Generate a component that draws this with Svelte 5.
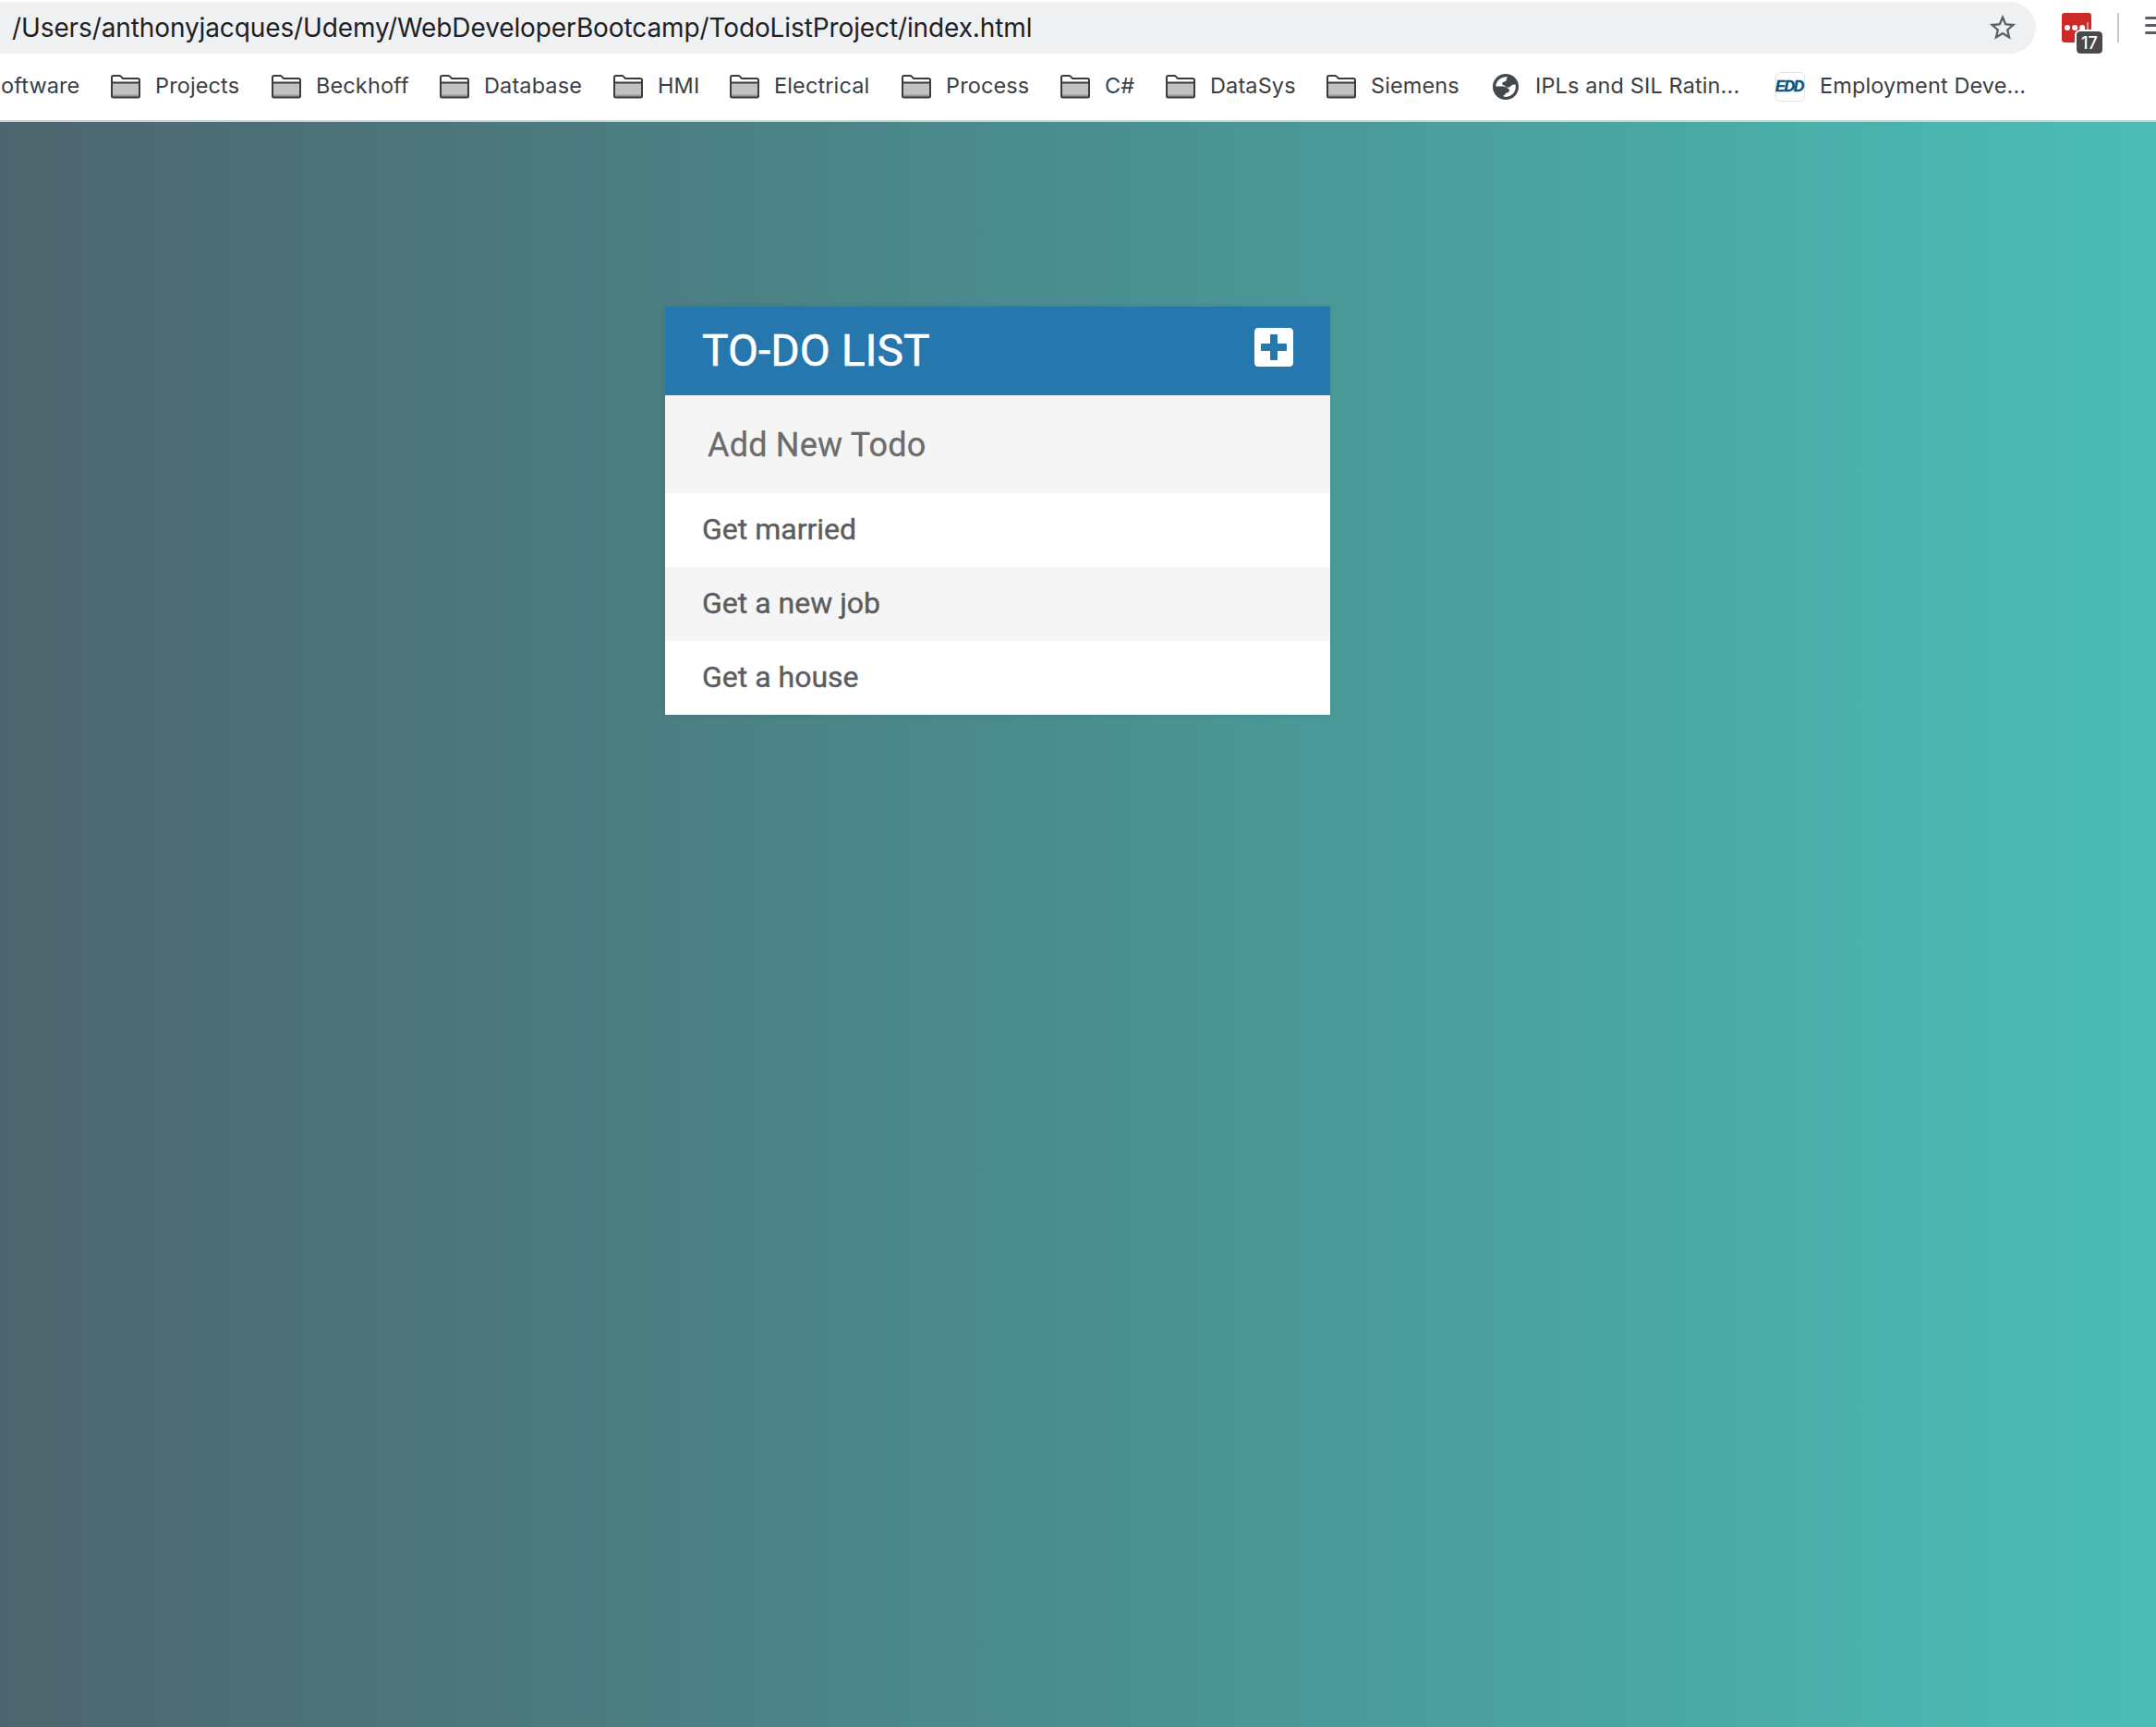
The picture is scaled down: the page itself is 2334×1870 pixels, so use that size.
<script>
  const folders = ['Projects', 'Beckhoff', 'Database', 'HMI', 'Electrical', 'Process', 'C#', 'DataSys', 'Siemens'];
  const todos = ['Get married', 'Get a new job', 'Get a house'];
</script>

<div class="window">
  <header class="chrome">
    <div class="toolbar">
      <div class="address">
        <span class="url">/Users/anthonyjacques/Udemy/WebDeveloperBootcamp/TodoListProject/index.html</span>
        <svg class="star" viewBox="0 0 24 24"><path d="M22 9.24l-7.19-.62L12 2 9.19 8.63 2 9.24l5.46 4.73L5.82 21 12 17.27 18.18 21l-1.63-7.03L22 9.24zM12 15.4l-3.76 2.27 1-4.28-3.32-2.88 4.38-.38L12 6.1l1.71 4.04 4.38.38-3.32 2.88 1 4.28L12 15.4z" /></svg>
      </div>
      <div class="extension">
        <svg viewBox="0 0 32 32"><rect width="32" height="32" rx="3" fill="#cc2929" /><circle cx="6" cy="16" r="3" fill="#fff" /><circle cx="14.2" cy="16" r="3" fill="#fff" /><circle cx="22.2" cy="16" r="3" fill="#fff" /><rect x="27.4" y="10" width="1.4" height="12" fill="#f3b5b5" /></svg>
        <span class="badge">17</span>
      </div>
      <div class="divider"></div>
      <svg class="queue" viewBox="0 0 12 20"><path d="M13 1.5H1.5M13 9.5H1.5M13 17.5H1.5" /></svg>
    </div>

    <nav class="bookmarks">
      <div class="bookmark first"><span>oftware</span></div>
      {#each folders as name}
        <div class="bookmark">
          <svg class="folder" viewBox="0 0 32 26">
            <path d="M1 9h30v15H1z" fill="#c1c1c1" />
            <path d="M1 21.5h30V24H1z" fill="#999" />
            <path d="M1 23.2V2.8Q1 1 2.8 1H9.4q.8 0 1.4.7L13 4h16.2Q31 4 31 5.8V23.2q0 1.300-1.300 1.300H2.300Q1 24.500 1 23.200zM1 8.500h30" fill="none" stroke="#3d3a3b" stroke-width="2" />
          </svg>
          <span>{name}</span>
        </div>
      {/each}
      <div class="bookmark">
        <svg class="globe" viewBox="0 0 28 28">
          <circle cx="14" cy="14" r="14" fill="#45494e" />
          <path d="M16 3.300C9.500 2.600 3.800 7 3.200 13.400H10.500Q13.200 13.400 14.200 14.800Q14 12.600 11.600 12.300Q10 11.800 10.200 10.200Q10.300 8.600 12.500 8.400Q14.800 8.200 14.900 6.200Q15 4.600 16 3.300Z" fill="#fff" />
          <path d="M24.700 11.800Q21 11 19.600 13.300Q18 15.200 14.200 14.800Q17.800 15.800 18 17.800Q18.100 20.200 15.400 20.400Q13.400 20.600 13.600 22.300Q13.400 23.300 11.200 23.600Q11.400 24.800 14 24.900C21 24.800 25.800 18.800 24.700 11.800Z" fill="#fff" />
        </svg>
        <span>IPLs and SIL Ratin...</span>
      </div>
      <div class="bookmark">
        <span class="edd">EDD</span>
        <span>Employment Deve...</span>
      </div>
    </nav>
  </header>

  <main>
    <section class="card">
      <h1>
        <span>To-Do List</span>
        <svg viewBox="0 0 42 42"><path fill-rule="evenodd" d="M4.500 0h33Q42 0 42 4.500v33Q42 42 37.500 42h-33Q0 42 0 37.500v-33Q0 0 4.500 0zM18 7q-1 0-1 1v9H8q-1 0-1 1v6q0 1 1 1h9v9q0 1 1 1h6q1 0 1-1v-9h9q1 0 1-1v-6q0-1-1-1h-9V8q0-1-1-1z" /></svg>
      </h1>
      <input type="text" placeholder="Add New Todo" />
      <ul>
        {#each todos as todo}
          <li>{todo}</li>
        {/each}
      </ul>
    </section>
  </main>
</div>

<style>
  .window {
    display: flex;
    flex-direction: column;
    width: 100%;
    height: 1870px;
    overflow: hidden;
    font-family: Inter, 'Liberation Sans', sans-serif;
  }
  .chrome {
    box-sizing: border-box;
    height: 132px;
    padding-top: 2px;
    background: #fff;
    border-bottom: 2px solid #d3d6d9;
  }
  .toolbar {
    display: flex;
    height: 56px;
  }
  .address {
    display: flex;
    box-sizing: border-box;
    width: 2204px;
    height: 56px;
    padding: 0 19px 0 13px;
    align-items: center;
    justify-content: space-between;
    background: #eff0f2;
    border-radius: 0 28px 28px 0;
  }
  .url {
    font-size: 28px;
    letter-spacing: -0.11px;
    color: #202124;
    white-space: nowrap;
  }
  .star {
    width: 34px;
    height: 34px;
    fill: #5a5d61;
  }
  .extension {
    position: relative;
    width: 32px;
    height: 32px;
    margin: 12px 28px 0;
  }
  .extension svg {
    display: block;
    width: 32px;
    height: 32px;
  }
  .badge {
    position: absolute;
    top: 18px;
    left: 14px;
    width: 28px;
    height: 24px;
    border: 2px solid #fff;
    border-radius: 6px;
    background: #4a4a4a;
    background-clip: padding-box;
    color: #fff;
    font-size: 18px;
    font-weight: 500;
    line-height: 26px;
    text-align: center;
  }
  .divider {
    width: 2px;
    height: 32px;
    margin-top: 12px;
    background: #c8c8c8;
  }
  .queue {
    width: 12px;
    height: 20px;
    margin: 16px 0 0 28px;
    fill: none;
    stroke: #5a5d61;
    stroke-width: 3;
    stroke-linecap: round;
  }
  .bookmarks {
    display: grid;
    grid-template-columns: 120px 174px 182px 188px 126px 186px 172px 114px 174px 180px 306px 1fr;
    height: 72px;
    align-items: center;
  }
  .bookmark {
    display: flex;
    height: 32px;
    align-items: center;
    gap: 16px;
    color: #3b3e42;
    font-size: 23.5px;
    letter-spacing: 0.12px;
    line-height: 28px;
    white-space: nowrap;
  }
  .bookmark > span:last-child {
    padding-bottom: 2px;
  }
  .first {
    padding-left: 1px;
  }
  .folder {
    width: 32px;
    height: 26px;
  }
  .globe {
    width: 28px;
    height: 28px;
    margin-right: 2px;
  }
  .edd {
    box-sizing: border-box;
    width: 32px;
    height: 32px;
    border: 1px solid #e4e4e4;
    border-radius: 5px;
    color: #08557c;
    font: italic 700 16px/30px 'Liberation Sans', sans-serif;
    letter-spacing: -1.2px;
    text-align: center;
    text-indent: -2px;
    -webkit-text-stroke: 0.5px #08557c;
  }
  main {
    flex: 1;
    padding-top: 200px;
    background: linear-gradient(to right, #4d656e, #4a9091 52%, #4bbeb6);
    font-family: Roboto, sans-serif;
  }
  .card {
    width: 720px;
    margin-left: 720px;
    background: #fff;
    box-shadow: 0 0 6px rgba(0, 0, 0, 0.1);
  }
  h1 {
    display: flex;
    box-sizing: border-box;
    height: 96px;
    margin: 0;
    padding: 0 40px;
    align-items: center;
    justify-content: space-between;
    background: #2677ae;
    color: #fff;
    font-size: 48px;
    font-weight: 400;
    text-transform: uppercase;
    -webkit-text-stroke: 0.5px #fff;
  }
  h1 span {
    padding-bottom: 2px;
  }
  h1 svg {
    width: 42px;
    height: 42px;
    margin-bottom: 8px;
    fill: #fff;
  }
  input {
    display: block;
    box-sizing: border-box;
    width: 100%;
    height: 106px;
    margin: 0;
    padding: 2px 46px 0;
    border: 0;
    border-radius: 0;
    background: #f5f5f5;
    font: 400 36px Roboto, sans-serif;
    letter-spacing: 0.2px;
  }
  input::placeholder {
    color: #6c6c6c;
    opacity: 1;
    -webkit-text-stroke: 0.3px #6c6c6c;
  }
  ul {
    margin: 0;
    padding: 0;
    list-style: none;
  }
  li {
    height: 80px;
    padding: 0 40px;
    color: #5c5c5c;
    font-size: 32px;
    line-height: 78px;
    -webkit-text-stroke: 0.4px #5c5c5c;
  }
  li:nth-child(2n) {
    background: #f5f5f5;
  }
</style>
